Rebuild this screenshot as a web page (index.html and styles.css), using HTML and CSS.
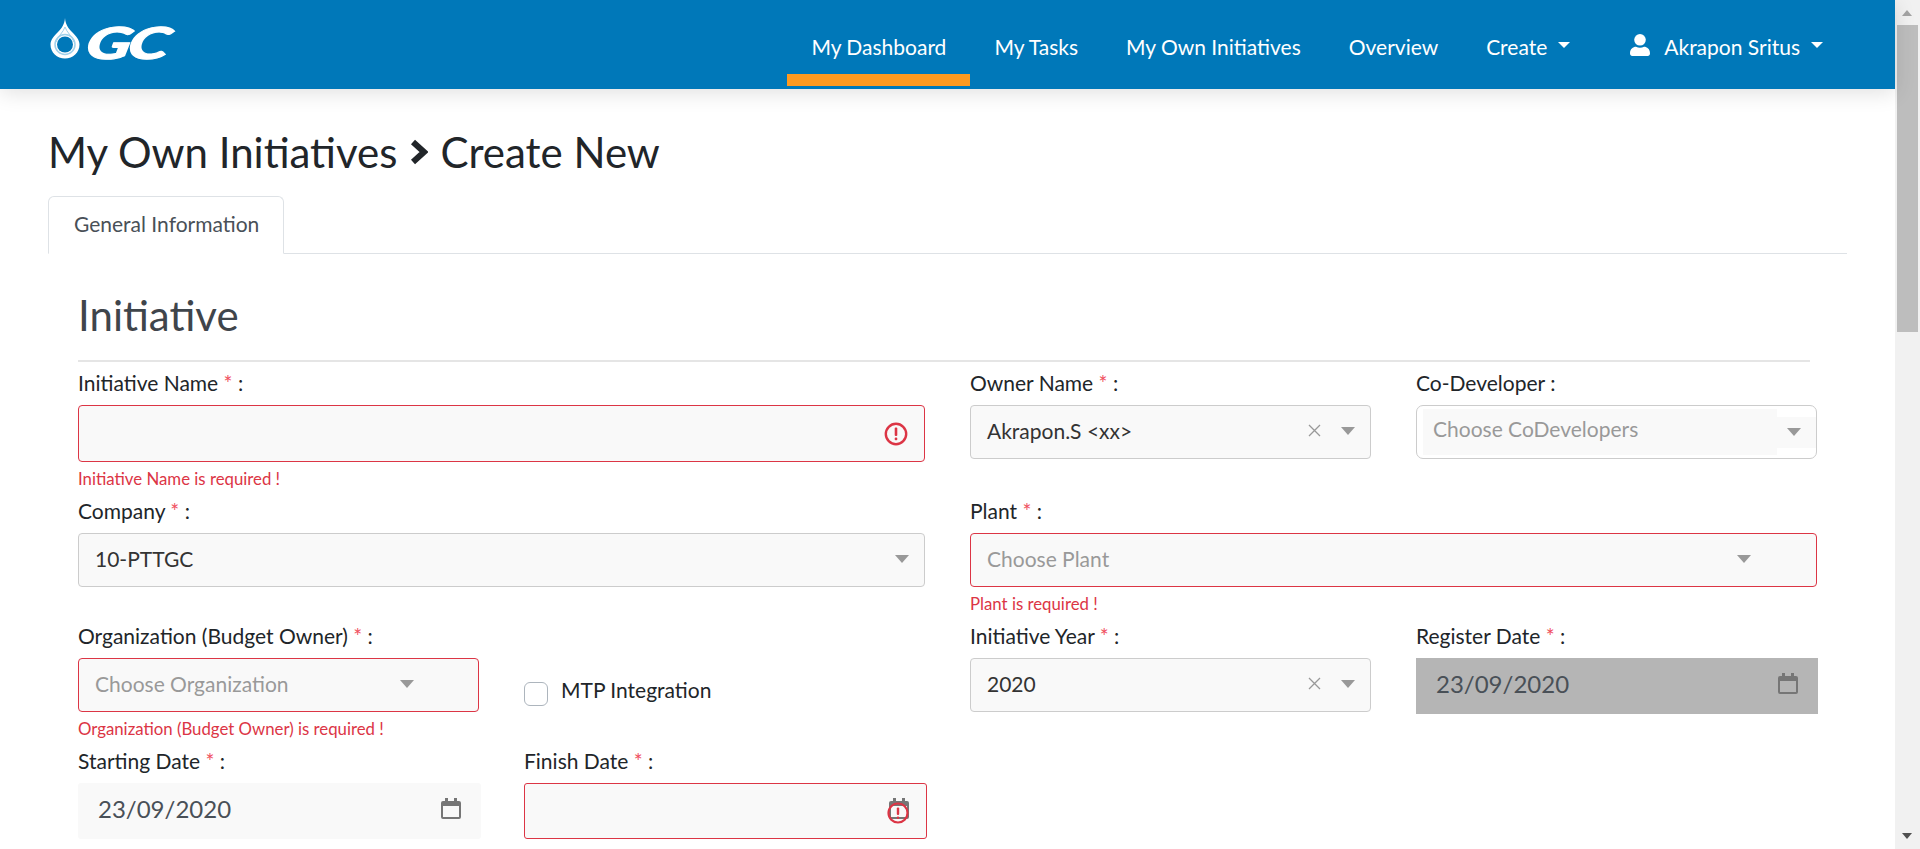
FILE: index.html
```html
<!DOCTYPE html>
<html lang="en">
<head>
<meta charset="utf-8">
<title>My Own Initiatives - Create New</title>
<link rel="stylesheet" href="styles.css">
</head>
<body>
<div class="shell">
<div class="app">
<header class="topbar">
  <div class="logo">
    <svg class="logo-drop" width="30" height="41" viewBox="0 0 30 41">
      <path fill="#fff" d="M15 0C15.500 6 18 10 22 14C26 18 29.500 22 29.500 26.500C29.500 34.500 23 40.500 15 40.500C7 40.500 .5 34.500 .5 26.500C.5 22 4 18 8 14C12 10 14.500 6 15 0Z"/>
      <circle cx="15" cy="26.500" r="8" fill="#0078b9"/>
      <circle cx="15" cy="26.500" r="10" fill="none" stroke="#9fd0ea" stroke-width="1.500"/>
      <path fill="none" stroke="#9fd0ea" stroke-width="1" d="M15 9C13.500 14 8 18 6 24M15 9C16.500 14 22 18 24 24"/>
    </svg>
    <span class="logo-text">GC</span>
  </div>
  <nav class="nav">
    <a class="nav-item active">My Dashboard</a>
    <a class="nav-item">My Tasks</a>
    <a class="nav-item">My Own Initiatives</a>
    <a class="nav-item">Overview</a>
    <a class="nav-item">Create<i class="nav-caret"></i></a>
    <a class="nav-item user">
      <svg class="user-icon" width="20" height="22" viewBox="0 0 20 22"><circle cx="10" cy="5.800" r="5.800" fill="#fff"/><path fill="#fff" d="M0 19.500C0 15 3 12.800 6 12.800C8.500 14 11.500 14 14 12.800C17 12.800 20 15 20 19.500C20 21 19 22 17.800 22H2.200C1 22 0 21 0 19.500Z"/></svg>
      Akrapon Sritus<i class="nav-caret"></i>
    </a>
  </nav>
</header>

<main class="page">
  <h1 class="page-title">My Own Initiatives
    <svg class="crumb" width="18" height="26" viewBox="0 0 18 26"><path fill="none" stroke="#212529" stroke-width="6" d="M3 3L14 13L3 23"/></svg>
    Create New</h1>

  <div class="tabs"><a class="tab">General Information</a></div>

  <section class="panel">
    <h2 class="section-title">Initiative</h2>
    <hr class="rule">

    <div class="form-row">
      <div class="field">
        <label class="label">Initiative Name <em>*</em> :</label>
        <div class="control tall invalid">
          <svg class="icon-alert" width="24" height="24" viewBox="0 0 24 24"><circle cx="12" cy="12" r="10.200" fill="none" stroke="#dc3545" stroke-width="2.400"/><rect x="10.700" y="5.500" width="2.600" height="8.500" rx="1" fill="#dc3545"/><rect x="10.700" y="15.500" width="2.600" height="2.800" rx="1" fill="#dc3545"/></svg>
        </div>
        <p class="error">Initiative Name is required !</p>
      </div>
      <div class="split">
        <div class="field">
          <label class="label">Owner Name <em>*</em> :</label>
          <div class="control">
            <span class="value">Akrapon.S &lt;xx&gt;</span>
            <svg class="clear" width="13" height="13" viewBox="0 0 13 13"><path stroke="#999" stroke-width="1.300" d="M1 1L12 12M12 1L1 12"/></svg>
            <i class="caret"></i>
          </div>
        </div>
        <div class="field">
          <label class="label">Co-Developer :</label>
          <div class="control multi">
            <span class="multi-main"><span class="placeholder">Choose CoDevelopers</span></span>
            <span class="multi-side"><i class="caret caret-side"></i></span>
          </div>
        </div>
      </div>
    </div>

    <div class="form-row">
      <div class="field">
        <label class="label">Company <em>*</em> :</label>
        <div class="control">
          <span class="value">10-PTTGC</span>
          <i class="caret caret-far"></i>
        </div>
      </div>
      <div class="field">
        <label class="label">Plant <em>*</em> :</label>
        <div class="control invalid">
          <span class="placeholder">Choose Plant</span>
          <i class="caret caret-plant"></i>
        </div>
        <p class="error">Plant is required !</p>
      </div>
    </div>

    <div class="form-row">
      <div class="split">
        <div class="field">
          <label class="label">Organization (Budget Owner) <em>*</em> :</label>
          <div class="control invalid">
            <span class="placeholder">Choose Organization</span>
            <i class="caret caret-org"></i>
          </div>
          <p class="error">Organization (Budget Owner) is required !</p>
        </div>
        <div class="check-cell">
          <span class="checkbox"></span>
          <span class="check-label">MTP Integration</span>
        </div>
      </div>
      <div class="split">
        <div class="field">
          <label class="label">Initiative Year <em>*</em> :</label>
          <div class="control">
            <span class="value">2020</span>
            <svg class="clear" width="13" height="13" viewBox="0 0 13 13"><path stroke="#999" stroke-width="1.300" d="M1 1L12 12M12 1L1 12"/></svg>
            <i class="caret"></i>
          </div>
        </div>
        <div class="field">
          <label class="label">Register Date <em>*</em> :</label>
          <div class="date disabled">
            <span class="date-value">23/09/2020</span>
            <svg class="cal" width="20" height="21" viewBox="0 0 20 21"><path fill="none" stroke="#767676" stroke-width="2" d="M2 4H18C18.600 4 19 4.400 19 5V19C19 19.600 18.600 20 18 20H2C1.400 20 1 19.600 1 19V5C1 4.400 1.400 4 2 4Z"/><path fill="#767676" d="M1 4H19V8H1ZM4 0H7V4H4ZM13 0H16V4H13Z"/></svg>
          </div>
        </div>
      </div>
    </div>

    <div class="form-row">
      <div class="split">
        <div class="field">
          <label class="label">Starting Date <em>*</em> :</label>
          <div class="date borderless">
            <span class="date-value">23/09/2020</span>
            <svg class="cal" width="20" height="21" viewBox="0 0 20 21"><path fill="none" stroke="#767676" stroke-width="2" d="M2 4H18C18.600 4 19 4.400 19 5V19C19 19.600 18.600 20 18 20H2C1.400 20 1 19.600 1 19V5C1 4.400 1.400 4 2 4Z"/><path fill="#767676" d="M1 4H19V8H1ZM4 0H7V4H4ZM13 0H16V4H13Z"/></svg>
          </div>
        </div>
        <div class="field">
          <label class="label">Finish Date <em>*</em> :</label>
          <div class="date borderless invalid">
            <svg class="cal" width="20" height="21" viewBox="0 0 20 21"><path fill="none" stroke="#767676" stroke-width="2" d="M2 4H18C18.600 4 19 4.400 19 5V19C19 19.600 18.600 20 18 20H2C1.400 20 1 19.600 1 19V5C1 4.400 1.400 4 2 4Z"/><path fill="#767676" d="M1 4H19V8H1ZM4 0H7V4H4ZM13 0H16V4H13Z"/></svg>
            <svg class="cal-alert" width="22" height="22" viewBox="0 0 22 22"><circle cx="11" cy="11" r="9.500" fill="none" stroke="#dc3545" stroke-width="2.200"/><rect x="9.800" y="5.500" width="2.400" height="7.500" rx="1" fill="#dc3545"/><rect x="9.800" y="14.500" width="2.400" height="2.400" rx="1" fill="#dc3545"/></svg>
          </div>
        </div>
      </div>
    </div>
  </section>
</main>
</div>
<aside class="scrollbar">
  <span class="scroll-up"></span>
  <span class="scroll-thumb"></span>
  <span class="scroll-down"></span>
</aside>
</div>
</body>
</html>
```

FILE: styles.css
```css
* { box-sizing: border-box; }
body {
  margin: 0;
  font-family: Lato, "Open Sans", sans-serif;
  font-size: 21px;
  color: #212529;
  background: #fff;
}

/* window with its scrollbar */
.shell { display: flex; height: 100vh; overflow: hidden; }
.app { flex: 1; min-width: 0; }
.scrollbar {
  flex: none;
  width: 25px;
  display: flex;
  flex-direction: column;
  background: #f1f1f1;
}
.scroll-up {
  display: block;
  width: 0;
  margin: 10px 0 9px 7px;
  border-bottom: 6px solid #a3a3a3;
  border-left: 5.500px solid transparent;
  border-right: 5.500px solid transparent;
}
.scroll-thumb { display: block; height: 307px; margin: 0 2px; background: #bdbdbd; }
.scroll-down {
  display: block;
  width: 0;
  margin: auto 0 10px 7px;
  border-top: 6px solid #505050;
  border-left: 5.500px solid transparent;
  border-right: 5.500px solid transparent;
}

/* header */
.topbar {
  display: flex;
  align-items: stretch;
  height: 89px;
  padding: 0 48px 0 50px;
  background: #0078b9;
  box-shadow: 0 4px 20px rgba(0, 0, 0, .12);
  position: relative;
}
.logo { display: flex; align-items: flex-start; padding-top: 18px; gap: 7px; }
.logo-text {
  display: block;
  width: 91px;
  margin-top: 3px;
  font-size: 44px;
  line-height: 42px;
  font-weight: 900;
  font-style: italic;
  color: #fff;
  -webkit-text-stroke: 1px #fff;
  transform: skewX(-12deg) scaleX(1.520);
  transform-origin: left center;
  letter-spacing: -2px;
}
.nav { display: flex; margin-left: auto; }
.nav-item {
  position: relative;
  display: flex;
  align-items: center;
  padding: 4px 24px 0;
  color: #fff;
  white-space: nowrap;
}
.nav-item.active::after {
  content: "";
  position: absolute;
  left: 0; right: 0; bottom: 3px;
  height: 12px;
  background: #ff9a1f;
}
.nav-item.user { margin-left: 12px; }
.user-icon { margin-right: 14px; margin-top: -3px; }
.nav-caret {
  display: block;
  margin-left: 11px;
  margin-top: -3px;
  border-top: 6px solid #fff;
  border-left: 6.500px solid transparent;
  border-right: 6.500px solid transparent;
}

/* page */
.page { padding: 39px 48px 0; }
.page-title {
  display: flex;
  align-items: center;
  gap: 12.500px;
  margin: 0 0 20px;
  font-size: 42px;
  line-height: 48px;
  font-weight: 400;
  color: #212529;
}
.crumb { flex: none; }
.tabs { display: flex; height: 58px; border-bottom: 1px solid #dee2e6; }
.tab {
  height: 58px;
  padding: 14px 24px 0 25px;
  border: 1px solid #dee2e6;
  border-bottom-color: #fff;
  border-radius: 6px 6px 0 0;
  color: #495057;
  background: #fff;
}
.panel { padding: 37px 37px 0 30px; }
.section-title {
  margin: 0;
  font-size: 42px;
  line-height: 48px;
  font-weight: 400;
  color: #3f454b;
}
.rule { margin: 21px 0 8px; border: 0; border-top: 2px solid #e5e5e5; }

/* form grid */
.form-row {
  display: grid;
  grid-template-columns: 847px 847px;
  column-gap: 45px;
  margin-bottom: 6px;
}
.split {
  display: grid;
  grid-template-columns: 401px 401px;
  column-gap: 45px;
}
.label { display: block; height: 35px; line-height: 25px; white-space: nowrap; }
.label em { font-style: normal; color: #f0505f; }
.error { margin: 6px 0 0; height: 24px; font-size: 16.800px; line-height: 22px; color: #dc3545; }

.control {
  position: relative;
  display: flex;
  align-items: center;
  height: 54px;
  padding: 0 0 3px 16px;
  background: #f9f9f9;
  border: 1px solid #ccc;
  border-radius: 4px;
}
.control.tall { height: 57px; padding-bottom: 0; }
.invalid { border: 1px solid #dc3545 !important; }
.placeholder { color: #999; }
.value { color: #333; }
.icon-alert { margin-left: auto; margin-right: 16px; }
.clear { margin-left: auto; }
.caret {
  display: block;
  margin-left: 20px;
  margin-right: 15px;
  border-top: 8px solid #999;
  border-left: 7.500px solid transparent;
  border-right: 7.500px solid transparent;
}
.caret-far { margin-left: auto; }
.caret-plant { margin-left: auto; margin-right: 65px; }
.caret-org { margin-left: auto; margin-right: 64px; }
.caret-side { margin-left: 0; }

.multi {
  padding: 0;
  background: #fff;
  border-radius: 7px;
  overflow: hidden;
}
.multi-main {
  display: flex;
  flex: none;
  align-items: center;
  width: 354px;
  height: 46px;
  padding: 0 0 8px 10px;
  margin-left: 6px;
  background: #f9f9f9;
}
.multi-side {
  display: flex;
  align-items: center;
  justify-content: flex-end;
  flex: 1;
  min-width: 0;
  height: 31px;
  background: #f9f9f9;
}

.date {
  display: flex;
  align-items: center;
  justify-content: space-between;
  position: relative;
  height: 56px;
  width: 403px;
  padding: 0 20px 6px;
  background: #f9f9f9;
  border-radius: 3px;
}
.date-value { font-size: 24px; color: #495057; }
.date.disabled { width: 402px; background: #b5b5b5; border-radius: 0; }
.date .cal { margin-left: auto; }
.invalid .cal { margin-right: -3px; }
.cal-alert { position: absolute; right: 17px; top: 18px; }

.check-cell {
  display: flex;
  align-items: flex-start;
  gap: 13px;
  padding-top: 59px;
}
.checkbox {
  flex: none;
  width: 24px;
  height: 24px;
  border: 1px solid #adb5bd;
  border-radius: 6px;
  background: #fff;
}
.check-label { line-height: 20px; margin-top: -2px; }
```
